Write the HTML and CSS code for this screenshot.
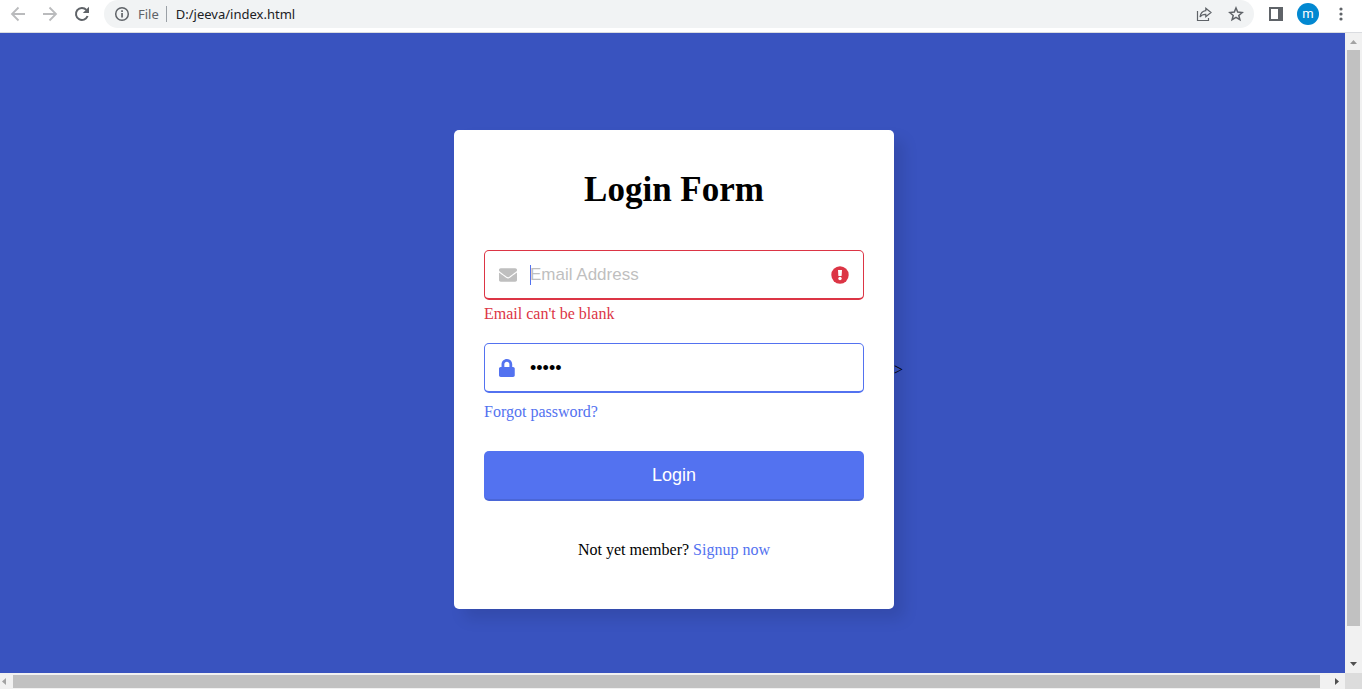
FILE: index.html
```html
<!DOCTYPE html>
<html lang="en">
<head>
<meta charset="utf-8">
<title>Login Form</title>
<link rel="stylesheet" href="styles.css">
</head>
<body>
<header class="toolbar">
  <nav class="nav-buttons">
    <button class="icon-btn" aria-label="Back" disabled><svg width="16" height="16" viewBox="0 0 16 16" fill="none" stroke="#babbbd" stroke-width="1.800"><path d="M15 8H2M8.500 1.500 2 8l6.500 6.500"/></svg></button>
    <button class="icon-btn" aria-label="Forward" disabled><svg width="16" height="16" viewBox="0 0 16 16" fill="none" stroke="#babbbd" stroke-width="1.800"><path d="M1 8h13M7.500 1.500 14 8l-6.500 6.500"/></svg></button>
    <button class="icon-btn" aria-label="Reload"><svg width="16" height="16" viewBox="0 0 16 16"><path d="M13.600 10A6 6 0 1 1 12.400 3.900" fill="none" stroke="#5f6368" stroke-width="2"/><path d="M15 .8V7H8.800z" fill="#5f6368"/></svg></button>
  </nav>
  <div class="address">
    <svg width="16" height="16" viewBox="0 0 16 16"><circle cx="8" cy="8" r="6.300" fill="none" stroke="#5f6368" stroke-width="1.500"/><path d="M7.200 7h1.700v4.500H7.200zM7.200 4.300h1.700V6H7.200z" fill="#5f6368"/></svg>
    <span class="scheme">File</span>
    <span class="divider"></span>
    <span class="url">D:/jeeva/index.html</span>
    <button class="icon-btn" aria-label="Share"><svg width="16" height="16" viewBox="0 0 16 16" fill="none" stroke="#5f6368" stroke-width="1.200"><path d="M1.500 5v9.500h11V12"/><path d="M9.800 2.200 15 6.500 9.800 10.800V8.300C7.200 8.200 5.400 9 4 11 4.500 7.500 6.300 5.200 9.800 4.700z"/></svg></button>
    <button class="icon-btn" aria-label="Bookmark"><svg width="16" height="16" viewBox="0 0 16 16" fill="none" stroke="#5f6368" stroke-width="1.500"><path d="m8 2 1.700 4.100 4.500.4-3.400 2.900 1.100 4.300L8 11.400l-3.900 2.300 1.100-4.300-3.400-2.900 4.500-.4z"/></svg></button>
  </div>
  <div class="actions">
    <button class="icon-btn" aria-label="Side panel"><svg width="14" height="14" viewBox="0 0 14 14"><path fill="#5f6368" fill-rule="evenodd" d="M0 0h14v14H0zM2 2v10h7V2z"/></svg></button>
    <button class="avatar" aria-label="Profile">m</button>
    <button class="icon-btn" aria-label="Menu"><svg width="16" height="16" viewBox="0 0 16 16" fill="#5f6368"><circle cx="8" cy="3" r="1.600"/><circle cx="8" cy="8" r="1.600"/><circle cx="8" cy="13" r="1.600"/></svg></button>
  </div>
</header>
<div class="viewport">
  <main class="page">
    <div class="card">
      <h1 class="title">Login Form</h1>
      <form class="form">
        <div class="group">
          <label class="field field-error">
            <svg class="field-icon" width="18" height="18" viewBox="0 0 512 512" fill="#bfbfbf"><path d="M502.300 190.800c3.900-3.100 9.700-.2 9.700 4.700V400c0 26.500-21.500 48-48 48H48c-26.500 0-48-21.500-48-48V195.600c0-5 5.700-7.800 9.700-4.700 22.400 17.400 52.100 39.500 154.100 113.600 21.100 15.400 56.700 47.800 92.200 47.600 35.700.3 72-32.800 92.300-47.600 102-74.100 131.600-96.300 154-113.700zM256 320c23.200.4 56.600-29.200 73.400-41.400 132.700-96.300 142.800-104.700 173.400-128.700 5.800-4.500 9.200-11.500 9.200-18.900v-19c0-26.500-21.500-48-48-48H48c-26.500 0-48 21.500-48 48v19c0 7.400 3.400 14.300 9.200 18.900 30.600 23.900 40.700 32.400 173.400 128.700 16.800 12.200 50.200 41.800 73.400 41.400z"/></svg>
            <span class="caret"></span>
            <input class="input" type="text" placeholder="Email Address" aria-label="Email Address">
            <svg width="18" height="18" viewBox="0 0 18 18"><circle cx="9" cy="9" r="8.700" fill="#dc3545"/><path d="M7 4h4l-.4 6H7.400z" fill="#fff"/><circle cx="9" cy="12.500" r="1.700" fill="#fff"/></svg>
          </label>
          <p class="error">Email can't be blank</p>
        </div>
        <label class="field field-password">
          <svg class="field-icon" width="18" height="18" viewBox="0 0 512 512" fill="#5372f0"><path d="M400 224h-24v-72C376 68.200 307.800 0 224 0S72 68.200 72 152v72H48c-26.500 0-48 21.500-48 48v192c0 26.500 21.500 48 48 48h352c26.500 0 48-21.500 48-48V272c0-26.500-21.500-48-48-48zm-104 0H152v-72c0-39.700 32.300-72 72-72s72 32.300 72 72v72z"/></svg>
          <input class="input" type="password" value="jeeva" aria-label="Password">
        </label>
        <p class="forgot"><a class="link" href="#">Forgot password?</a></p>
        <button class="submit" type="button">Login</button>
      </form>
      <p class="signup">Not yet member? <a class="link" href="#">Signup now</a></p>
      <span class="stray">&gt;</span>
    </div>
  </main>
  <div class="vbar">
    <svg width="7" height="4" viewBox="0 0 7 4"><path d="M0 4h7L3.500 0z" fill="#a3a3a3"/></svg>
    <div class="vtrack"><div class="vthumb"></div></div>
    <svg width="7" height="4" viewBox="0 0 7 4"><path d="M0 0h7L3.500 4z" fill="#505050"/></svg>
  </div>
  <div class="hbar">
    <svg width="4" height="7" viewBox="0 0 4 7"><path d="M4 0v7L0 3.500z" fill="#a3a3a3"/></svg>
    <div class="hthumb"></div>
    <svg width="4" height="7" viewBox="0 0 4 7"><path d="M0 0v7l4-3.500z" fill="#505050"/></svg>
  </div>
  <div class="corner"></div>
</div>
</body>
</html>
```
FILE: styles.css
```css
* { box-sizing: border-box; margin: 0; padding: 0; }
body {
  display: flex;
  flex-direction: column;
  height: 100vh;
  font-family: "Liberation Serif", "Times New Roman", serif;
  font-size: 16px;
  line-height: 18px;
  overflow: hidden;
}
button { border: 0; background: none; }
svg { display: block; flex: none; }

.toolbar {
  display: flex;
  align-items: flex-start;
  height: 33px;
  flex: none;
  background: #fff;
  border-bottom: 1px solid #dadce0;
  font-family: "Noto Sans", "Open Sans", sans-serif;
}
.nav-buttons, .actions { display: flex; align-items: center; height: 28px; }
.nav-buttons { gap: 16px; padding: 0 14px 0 10px; }
.actions { gap: 12px; padding: 0 13px 0 15px; }
.icon-btn { display: flex; flex: none; }
.address {
  flex: 1;
  display: flex;
  align-items: center;
  height: 28px;
  padding: 0 10px;
  border-radius: 14px;
  background: #f1f3f4;
  font-size: 13px;
}
.scheme { margin-left: 8px; color: #5f6368; }
.divider { width: 1px; height: 16px; margin: 0 9px 0 7px; background: #9aa0a6; }
.url { flex: 1; color: #202124; }
.address .icon-btn { margin-left: 16px; }
.avatar {
  width: 22px;
  height: 22px;
  margin: 0 2px;
  border-radius: 50%;
  background: #0288d1;
  color: #fff;
  font: 13px/20px Roboto, sans-serif;
}

.viewport {
  flex: 1;
  min-height: 0;
  display: grid;
  grid-template: minmax(0, 1fr) 16px / minmax(0, 1fr) 17px;
}
.page {
  display: flex;
  align-items: center;
  justify-content: center;
  padding: 33px 0 0 3px;
  background: #3953bf;
}
.card {
  position: relative;
  width: 440px;
  padding: 40px 30px 50px;
  border-radius: 5px;
  background: #fff;
  text-align: center;
  box-shadow: 10px 10px 15px rgba(0, 0, 0, 0.1);
}
.title { font-size: 35px; line-height: 40px; }
.form { margin: 40px 0; text-align: left; }
.group { margin-bottom: 20px; }
.field {
  display: flex;
  align-items: center;
  height: 50px;
  padding: 0 14px;
  border: 1px solid #5372f0;
  border-bottom-width: 2px;
  border-radius: 5px;
}
.field-error { border-color: #dc3545; }
.field-icon { margin-right: 13px; }
.caret { width: 1px; height: 20px; margin-right: -1px; background: #5372f0; }
.input {
  flex: 1;
  min-width: 0;
  border: 0;
  outline: 0;
  background: none;
  font: 17px/20px "Liberation Sans", Arial, sans-serif;
}
.field-password .input { font-size: 18px; }
.input::placeholder { color: #bfbfbf; }
.error { margin-top: 5px; color: #dc3545; }
.forgot { margin: 10px 0 30px; }
.link { color: #5372f0; text-decoration: none; }
.submit {
  display: block;
  width: 100%;
  height: 50px;
  border-bottom: 2px solid rgba(0, 0, 0, 0.1);
  border-radius: 5px;
  background: #5372f0;
  color: #fff;
  font: 18px/20px "Liberation Sans", Arial, sans-serif;
}
.stray { position: absolute; left: 100%; top: 50%; transform: translateY(-50%); }

.vbar, .hbar { display: flex; align-items: center; background: #f1f1f1; }
.vbar { flex-direction: column; padding: 7px 0; gap: 6px; }
.vtrack { flex: 1; width: 13px; }
.vthumb { height: 95%; background: #c1c1c1; }
.hbar { padding: 0 6px 0 2px; gap: 7px; }
.hthumb { flex: 1; height: 13px; margin-right: 8px; background: #c1c1c1; }
.corner { background: #dcdcdc; }
```
